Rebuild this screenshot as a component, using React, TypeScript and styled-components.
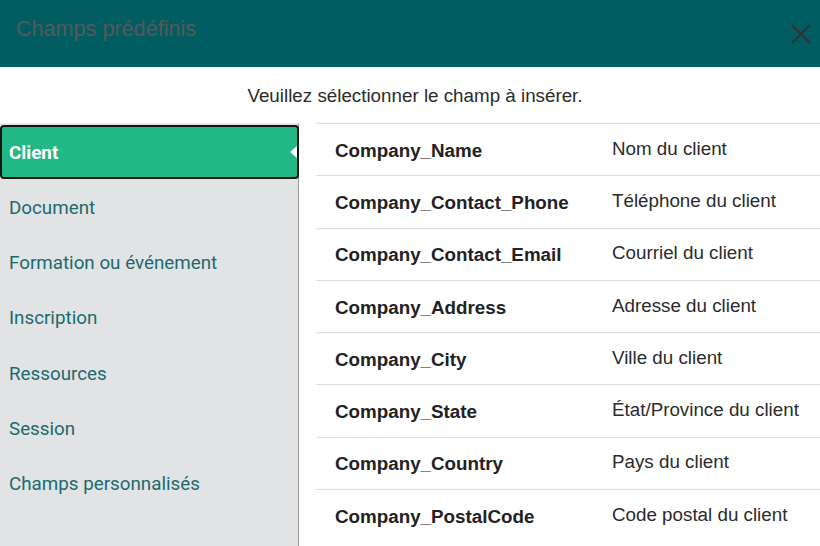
import React from "react";
import styled, { createGlobalStyle } from "styled-components";

const Global = createGlobalStyle`
  html, body { margin: 0; padding: 0; background: #fff; overflow: hidden; }
  body { width: 820px; height: 546px; }
`;

const Dialog = styled.div`
  width: 830px;
  height: 546px;
  display: flex;
  flex-direction: column;
  background: #fff;
  font-family: "Liberation Sans", Arial, sans-serif;
`;

const Header = styled.div`
  height: 67px;
  box-sizing: border-box;
  background: #005e63;
  display: flex;
  align-items: flex-start;
  justify-content: space-between;
  padding: 15px 18px 0 16px;
`;

const Title = styled.div`
  font-size: 21.6px;
  line-height: 28px;
  color: #585858;
`;

const Close = styled.button`
  border: 0;
  background: transparent;
  padding: 0;
  margin-top: 8px;
  width: 22px;
  height: 22px;
  display: flex;
  cursor: pointer;
`;

const Subtitle = styled.div`
  height: 56px;
  display: flex;
  align-items: center;
  justify-content: center;
  padding-top: 2px;
  box-sizing: border-box;
  font-size: 18.8px;
  color: #2b2b2b;
`;

const Body = styled.div`
  flex: 1;
  display: flex;
  gap: 17px;
`;

const Sidebar = styled.nav`
  width: 299px;
  flex: none;
  box-sizing: border-box;
  background: #e2e3e5;
  border-right: 1px solid #9a9a9a;
  border-top: 1px solid #e8e8e8;
  padding-top: 1px;
  display: flex;
  flex-direction: column;
`;

const NavItem = styled.div<{ $active?: boolean }>`
  position: relative;
  height: ${(p) => (p.$active ? "54px" : "55.3px")};
  flex: none;
  box-sizing: border-box;
  display: flex;
  align-items: center;
  padding-top: 2px;
  padding-left: ${(p) => (p.$active ? "7px" : "9px")};
  font-family: Roboto, "Liberation Sans", sans-serif;
  font-size: 18.8px;
  color: ${(p) => (p.$active ? "#fff" : "#1b6a6d")};
  font-weight: ${(p) => (p.$active ? 700 : 400)};
  background: ${(p) => (p.$active ? "#22b886" : "transparent")};
  border: ${(p) => (p.$active ? "2px solid #161616" : "0")};
  border-radius: ${(p) => (p.$active ? "4px" : "0")};
  margin-right: ${(p) => (p.$active ? "-1px" : "0")};
  ${(p) =>
    p.$active &&
    `
    &::after {
      content: "";
      position: absolute;
      right: 0;
      top: 50%;
      transform: translateY(-50%);
      border-style: solid;
      border-width: 6px 7px 6px 0;
      border-color: transparent #fff transparent transparent;
    }
  `}
`;

const Table = styled.div`
  flex: 1;
  display: flex;
  flex-direction: column;
`;

const Row = styled.div`
  display: grid;
  grid-template-columns: 296px 1fr;
  height: 52.3px;
  flex: none;
  box-sizing: border-box;
  border-top: 1px solid #dcdcdc;
  align-items: center;
  font-size: 18.8px;
  color: #2b2b2b;
`;

const Key = styled.div`
  padding-left: 19px;
  font-weight: 700;
  color: #222;
  padding-top: 2px;
`;

const Label = styled.div`
  padding-bottom: 2px;
`;

const navItems = [
  "Client",
  "Document",
  "Formation ou événement",
  "Inscription",
  "Ressources",
  "Session",
  "Champs personnalisés",
];

const fields: [string, string][] = [
  ["Company_Name", "Nom du client"],
  ["Company_Contact_Phone", "Téléphone du client"],
  ["Company_Contact_Email", "Courriel du client"],
  ["Company_Address", "Adresse du client"],
  ["Company_City", "Ville du client"],
  ["Company_State", "État/Province du client"],
  ["Company_Country", "Pays du client"],
  ["Company_PostalCode", "Code postal du client"],
];

export default function App() {
  return (
    <>
      <Global />
      <Dialog>
        <Header>
          <Title>Champs prédéfinis</Title>
          <Close aria-label="Fermer">
            <svg width="22" height="22" viewBox="0 0 22 22">
              <path d="M2 2 L20 20 M20 2 L2 20" stroke="#333" strokeWidth="2.4" fill="none" />
            </svg>
          </Close>
        </Header>
        <Subtitle>Veuillez sélectionner le champ à insérer.</Subtitle>
        <Body>
          <Sidebar>
            {navItems.map((n, i) => (
              <NavItem key={n} $active={i === 0}>
                {n}
              </NavItem>
            ))}
          </Sidebar>
          <Table>
            {fields.map(([k, v]) => (
              <Row key={k}>
                <Key>{k}</Key>
                <Label>{v}</Label>
              </Row>
            ))}
          </Table>
        </Body>
      </Dialog>
    </>
  );
}
